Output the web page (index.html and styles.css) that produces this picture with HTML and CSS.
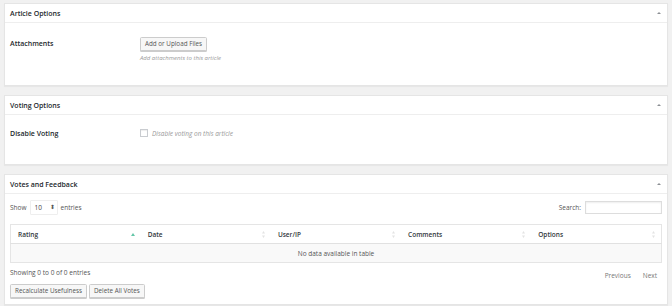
FILE: index.html
```html
<!DOCTYPE html>
<html lang="en">
<head>
  <meta charset="UTF-8" />
  <title>Article Options</title>
  <link rel="stylesheet" href="styles.css">
</head>
<body>

<!-- Article options -->
<div class="postbox postbox-article">
  <div class="postbox-head">
    <h2>Article Options</h2>
    <span class="toggle"></span>
  </div>
  <div class="inside">
    <div class="row">
      <div class="row-label">Attachments</div>
      <div class="row-field">
        <button type="button" class="button">Add or Upload Files</button>
        <p class="description">Add attachments to this article</p>
      </div>
    </div>
  </div>
</div>

<!-- Voting options -->
<div class="postbox postbox-voting">
  <div class="postbox-head">
    <h2>Voting Options</h2>
    <span class="toggle"></span>
  </div>
  <div class="inside">
    <div class="row">
      <div class="row-label">Disable Voting</div>
      <div class="row-field">
        <label class="check"><input type="checkbox" name="disable_voting"> Disable voting on this article</label>
      </div>
    </div>
  </div>
</div>

<!-- Votes and feedback -->
<div class="postbox postbox-votes">
  <div class="postbox-head">
    <h2>Votes and Feedback</h2>
    <span class="toggle"></span>
  </div>
  <div class="inside">
    <div class="dt-top">
      <div class="dt-length">
        Show
        <span class="dt-select">10 <span class="updown">&#x2B0D;</span></span>
        entries
      </div>
      <div class="dt-search">
        Search: <input type="text" class="dt-input">
      </div>
    </div>

    <table class="votes">
      <thead>
        <tr>
          <th class="sorted">Rating</th>
          <th>Date</th>
          <th>User/IP</th>
          <th>Comments</th>
          <th>Options</th>
        </tr>
      </thead>
      <tbody>
        <tr><td colspan="5" class="empty">No data available in table</td></tr>
      </tbody>
    </table>

    <div class="dt-bottom">
      <div class="dt-info">Showing 0 to 0 of 0 entries</div>
      <div class="dt-paging">
        <span>Previous</span>
        <span>Next</span>
      </div>
    </div>

    <div class="actions">
      <button type="button" class="button">Recalculate Usefulness</button>
      <button type="button" class="button">Delete All Votes</button>
    </div>
  </div>
</div>

</body>
</html>
```

FILE: styles.css
```css
body {
  font-family: 'Open Sans', 'Noto Sans', sans-serif;
  font-size: 6.5px;
  color: #444;
  background: #f1f1f1;
  margin: 0;
  padding: 3px 4px 0;
}

.postbox {
  background: #fff;
  border: 1px solid #e5e5e5;
  box-shadow: 0 1px 1px rgba(0,0,0,0.04);
  margin-bottom: 9px;
}

.postbox-head {
  height: 18px;
  border-bottom: 1px solid #eee;
  display: flex;
  align-items: center;
  justify-content: space-between;
  padding: 0 6px 0 5px;
}

.postbox-head h2 {
  margin: 0;
  font-size: 7px;
  font-weight: 600;
  color: #23282d;
}

.toggle {
  width: 0;
  height: 0;
  border-left: 2px solid transparent;
  border-right: 2px solid transparent;
  border-bottom: 2.5px solid #8c8f94;
}

.inside {
  padding: 0 5px;
}

.row {
  display: flex;
}

.row-label {
  width: 130px;
  font-size: 7px;
  font-weight: 600;
  color: #23282d;
  line-height: 14px;
}

.row-field {
  flex: 1;
}

.postbox-article .inside {
  padding-top: 14px;
  padding-bottom: 22px;
}

.postbox-voting .inside {
  padding-top: 14px;
  padding-bottom: 25px;
}

.postbox-voting .row-label {
  line-height: 10px;
}

.button {
  font-family: inherit;
  font-size: 6.3px;
  color: #555;
  height: 14px;
  line-height: 12px;
  padding: 0 4px;
  background: #f7f7f7;
  border: 1px solid #ccc;
  border-radius: 1.5px;
  box-shadow: 0 1px 0 #ccc;
  cursor: pointer;
}

.description {
  margin: 2px 0 0;
  line-height: 10px;
  font-style: italic;
  color: #999;
  font-size: 6px;
}

.check {
  display: flex;
  align-items: center;
  gap: 4px;
  line-height: 10px;
  font-style: italic;
  color: #999;
  font-size: 6.5px;
}

.check input {
  appearance: none;
  margin: 0;
  width: 8px;
  height: 8px;
  border: 1px solid #c9ccd0;
  border-radius: 0;
  background: #fff;
  box-shadow: inset 0 1px 1px rgba(0,0,0,0.07);
  position: relative;
  top: -1px;
}

/* votes table */
.postbox-votes .inside {
  padding-top: 6px;
  padding-bottom: 6px;
}

.dt-top {
  display: flex;
  justify-content: space-between;
  align-items: center;
  height: 14px;
  color: #555;
}

.dt-length {
  display: flex;
  align-items: center;
  gap: 3px;
}

.dt-select {
  display: inline-flex;
  align-items: center;
  justify-content: space-between;
  width: 20px;
  height: 13px;
  padding: 0 2px 0 4px;
  border: 1px solid #eee;
  border-radius: 1px;
  color: #444;
}

.updown {
  font-size: 6px;
  color: #555;
}

.dt-search {
  display: flex;
  align-items: center;
  gap: 4px;
}

.dt-input {
  width: 77px;
  height: 13px;
  box-sizing: border-box;
  margin: 0;
  border: 1px solid #ddd;
  box-shadow: inset 0 1px 2px rgba(0,0,0,0.07);
}

.votes {
  width: 100%;
  border-collapse: collapse;
  margin-top: 10px;
  border: 1px solid #e5e5e5;
  table-layout: fixed;
}

.votes th {
  text-align: left;
  font-weight: 600;
  font-size: 6.5px;
  color: #32373c;
  height: 18px;
  padding: 0 0 0 7px;
  border-bottom: 1px solid #e1e1e1;
  background: #fff url("data:image/svg+xml,%3Csvg xmlns='http://www.w3.org/2000/svg' width='3' height='7'%3E%3Cpath d='M1.5 0L3 2.5H0zM1.5 7L3 4.5H0z' fill='%23e3e3e3'/%3E%3C/svg%3E") no-repeat right 6px center;
}

.votes th.sorted {
  background-image: url("data:image/svg+xml,%3Csvg xmlns='http://www.w3.org/2000/svg' width='4' height='3'%3E%3Cpath d='M2 0L4 3H0z' fill='%2364c6a8'/%3E%3C/svg%3E");
}

.votes td.empty {
  background: #f9f9f9;
  text-align: center;
  height: 18px;
  padding: 0;
  color: #555;
}

.dt-bottom {
  display: flex;
  justify-content: space-between;
  align-items: flex-start;
  margin-top: 5px;
  color: #555;
}

.dt-info {
  line-height: 10px;
}

.dt-paging {
  display: flex;
  gap: 12px;
  padding: 3px 5px 0 0;
  line-height: 10px;
  color: #777;
}

.actions {
  display: flex;
  gap: 2px;
  margin-top: 3px;
}
```
